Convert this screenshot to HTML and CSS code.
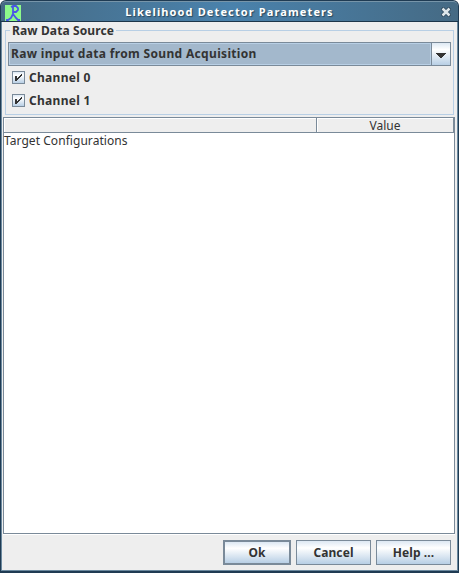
FILE: index.html
```
<!DOCTYPE html>
<html lang="en">
<head>
<meta charset="utf-8">
<title>Likelihood Detector Parameters</title>
<link rel="stylesheet" href="styles.css">
</head>
<body>
<div class="window">
  <header class="titlebar">
    <svg class="logo" width="16" height="16" viewBox="0 0 16 16">
      <rect width="16" height="16" fill="#8df98b"/>
      <path d="M8 1V10M6 2L8 1H11L13 3V5L11 7H8M8 9L6 13L3 15H1M8 9L11 13L13 15H15" fill="none" stroke="#4b55e6" stroke-width="1.8"/>
    </svg>
    <h1>Likelihood Detector Parameters</h1>
    <svg class="close" width="10" height="10" viewBox="0 0 10 10">
      <path d="M1 1L9 9M9 1L1 9" stroke="#263f52" stroke-width="4"/>
      <path d="M1.5 1.5L8.5 8.5M8.5 1.5L1.5 8.5" stroke="#dce6eb" stroke-width="2.6"/>
    </svg>
  </header>
  <main class="content">
    <section class="group">
      <h2>Raw Data Source</h2>
      <div class="combo">
        <div class="combo-value">Raw input data from Sound Acquisition</div>
        <div class="combo-button"><svg width="10" height="5" viewBox="0 0 10 5" shape-rendering="crispEdges"><path d="M0 0H10V1H9V2H8V3H7V4H6V5H4V4H3V3H2V2H1V1H0Z" fill="#333"/></svg></div>
      </div>
      <div class="check"><span class="box"><svg width="9" height="9" viewBox="0 0 9 9"><path d="M1 3H3V5H4V4H5V3H6V2H7V1H8V3H7V4H6V5H5V6H4V7H3V8H1Z" fill="#333"/></svg></span><span>Channel 0</span></div>
      <div class="check"><span class="box"><svg width="9" height="9" viewBox="0 0 9 9"><path d="M1 3H3V5H4V4H5V3H6V2H7V1H8V3H7V4H6V5H5V6H4V7H3V8H1Z" fill="#333"/></svg></span><span>Channel 1</span></div>
    </section>
    <section class="table">
      <div class="table-head"><div></div><div>Value</div></div>
      <div class="table-body">Target Configurations</div>
    </section>
    <footer class="buttons">
      <button class="default">Ok</button>
      <button>Cancel</button>
      <button>Help ...</button>
    </footer>
  </main>
</div>
</body>
</html>
```
FILE: styles.css
```
* { box-sizing: border-box; }
body { margin: 0; background: #fff; overflow: hidden; }
h1, h2 { margin: 0; font-size: inherit; }
svg { display: block; }
.window {
  width: 459px; height: 573px; padding: 1px 1px 2px;
  background: #1f3b53; border-radius: 6px 6px 0 0;
  display: flex; flex-direction: column;
  font: bold 12px/16px "Noto Sans", sans-serif; color: #333;
  white-space: nowrap;
}
.titlebar {
  height: 21px; flex: none; display: flex; align-items: center;
  padding: 1px 7px 0 4px;
  background: linear-gradient(90deg, #456a84, #4a82ac 50%, #456a84);
  border-top: 1px solid #7795a9; border-bottom: 1px solid #1d364a;
  border-radius: 5px 5px 0 0;
}
.titlebar h1 {
  flex: 1; padding-right: 3px; text-align: center; color: #fff;
  font: bold 11px/16px "Noto Sans", sans-serif; letter-spacing: 1.12px;
  text-shadow: 1px 1px 1px #29465b;
}
.logo { margin-top: 1px; }
.close { margin-top: 0; }
.content {
  flex: 1; min-height: 0; display: flex; flex-direction: column;
  background: #eee; border: solid #6b899f; border-width: 0 1px 1px;
  padding: 0 2px 0 1px;
}
.group {
  height: 85px; flex: none; margin: 8px 1px 0 2px; padding: 11px 2px 0;
  border: 1px solid #b8cfe5; position: relative;
}
.group h2 {
  position: absolute; left: 4px; top: -8px; padding: 0 2px;
  background: #eee; line-height: 16px; letter-spacing: .12px;
}
.combo { height: 24px; display: flex; border: 1px solid #7a8a99; }
.combo-value {
  flex: 1; padding-left: 1px; line-height: 20px; letter-spacing: .33px;
  background: #a3b8cc; border: 1px solid #b8cfe5;
}
.combo-button {
  width: 19px; border-left: 1px solid #7a8a99; display: flex;
  align-items: center; justify-content: center; padding-top: 2px;
  background: linear-gradient(#dde8f3, #fff 30%, #b8cfe5);
}
.check {
  height: 23px; display: flex; align-items: center;
  padding-left: 4px; gap: 4px; letter-spacing: .3px;
}
.box {
  width: 13px; height: 13px; border: 1px solid #7a8a99; padding: 1px;
  background: linear-gradient(#dde8f3, #fff 30%, #b8cfe5);
}
.table {
  flex: 1; display: flex; flex-direction: column; margin-top: 2px;
  border: 1px solid #7a8a99; background: #fff; font-weight: normal;
}
.table-head { height: 15px; display: flex; text-align: center; line-height: 15px; }
.table-head div {
  background: #eee; border: solid #7a8a99; border-width: 0 1px 1px 0;
  box-shadow: inset 1px 1px #fff; width: 313px;
}
.table-head div:last-child { flex: 1; }
.table-body { flex: 1; line-height: 16px; letter-spacing: .05px; }
.buttons {
  height: 36px; flex: none; display: flex; justify-content: flex-end;
  gap: 5px; padding: 5px 4px 6px 0; border-top: 1px solid #fff;
}
button {
  width: 75px; height: 25px; padding: 0; border: 1px solid #7a8a99;
  background: linear-gradient(#dde8f3, #fff 30%, #b8cfe5);
  font: inherit; color: inherit; letter-spacing: .1px;
}
.default { width: 68px; border-width: 2px; }
```
